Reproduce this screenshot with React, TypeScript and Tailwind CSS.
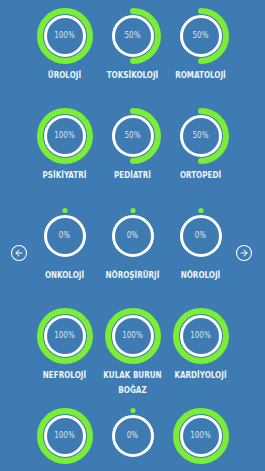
import React from 'react';
import { CircleArrowLeft, CircleArrowRight } from 'lucide-react';

interface DeptProps {
  name: string;
  percent: number; // 0, 50 or 100
}

const GREEN = '#79ee34';

const Ring: React.FC<{ percent: number }> = ({ percent }) => (
  <div className="relative w-[60px] h-[60px]">
    <svg width="60" height="60" viewBox="0 0 60 60">
      {percent >= 100 && <circle cx="30" cy="30" r="25" fill="none" stroke={GREEN} strokeWidth="6" />}
      {percent > 0 && percent < 100 && (
        <path d="M30 5 A25 25 0 0 1 30 55" fill="none" stroke={GREEN} strokeWidth="6" strokeLinecap="round" />
      )}
      {percent === 0 && <circle cx="30" cy="4.5" r="2.6" fill={GREEN} />}
      <circle cx="30" cy="30" r="19.5" fill="none" stroke="#ffffff" strokeWidth="3" />
    </svg>
    <div className="absolute inset-0 flex items-center justify-center text-[8px] text-[#d6e5f3] font-['Liberation_Sans_Narrow','DejaVu_Sans_Condensed',sans-serif]">
      {percent}%
    </div>
  </div>
);

const Dept: React.FC<DeptProps> = ({ name, percent }) => (
  <div className="h-[100px] flex flex-col items-center">
    <Ring percent={percent} />
    {name && (
      <p className="mt-[2px] w-[62px] text-center text-[8px] leading-[15px] font-bold text-[#eef4fa] font-['Liberation_Sans_Narrow','DejaVu_Sans_Condensed',sans-serif]">
        {name}
      </p>
    )}
  </div>
);

const App = () => {
  // bolumler - last row labels are below the fold
  const depts: DeptProps[] = [
    { name: 'ÜROLOJİ', percent: 100 },
    { name: 'TOKSİKOLOJİ', percent: 50 },
    { name: 'ROMATOLOJİ', percent: 50 },
    { name: 'PSİKİYATRİ', percent: 100 },
    { name: 'PEDİATRİ', percent: 50 },
    { name: 'ORTOPEDİ', percent: 50 },
    { name: 'ONKOLOJİ', percent: 0 },
    { name: 'NÖROŞİRÜRJİ', percent: 0 },
    { name: 'NÖROLOJİ', percent: 0 },
    { name: 'NEFROLOJİ', percent: 100 },
    { name: 'KULAK BURUN BOĞAZ', percent: 100 },
    { name: 'KARDİYOLOJİ', percent: 100 },
    { name: '', percent: 100 },
    { name: '', percent: 0 },
    { name: '', percent: 100 },
  ];

  return (
    <div className="relative w-[265px] h-[471px] overflow-hidden bg-[#3d7bb2]">
      <div className="grid grid-cols-[68px_68px_68px] justify-center pt-[6px]">
        {depts.map((d, i) => (
          <Dept key={i} name={d.name} percent={d.percent} />
        ))}
      </div>

      <button className="absolute left-[10px] top-[244px] text-white">
        <CircleArrowLeft size={18} strokeWidth={1.4} />
      </button>
      <button className="absolute left-[235px] top-[244px] text-white">
        <CircleArrowRight size={18} strokeWidth={1.4} />
      </button>
    </div>
  );
};

export default App;
